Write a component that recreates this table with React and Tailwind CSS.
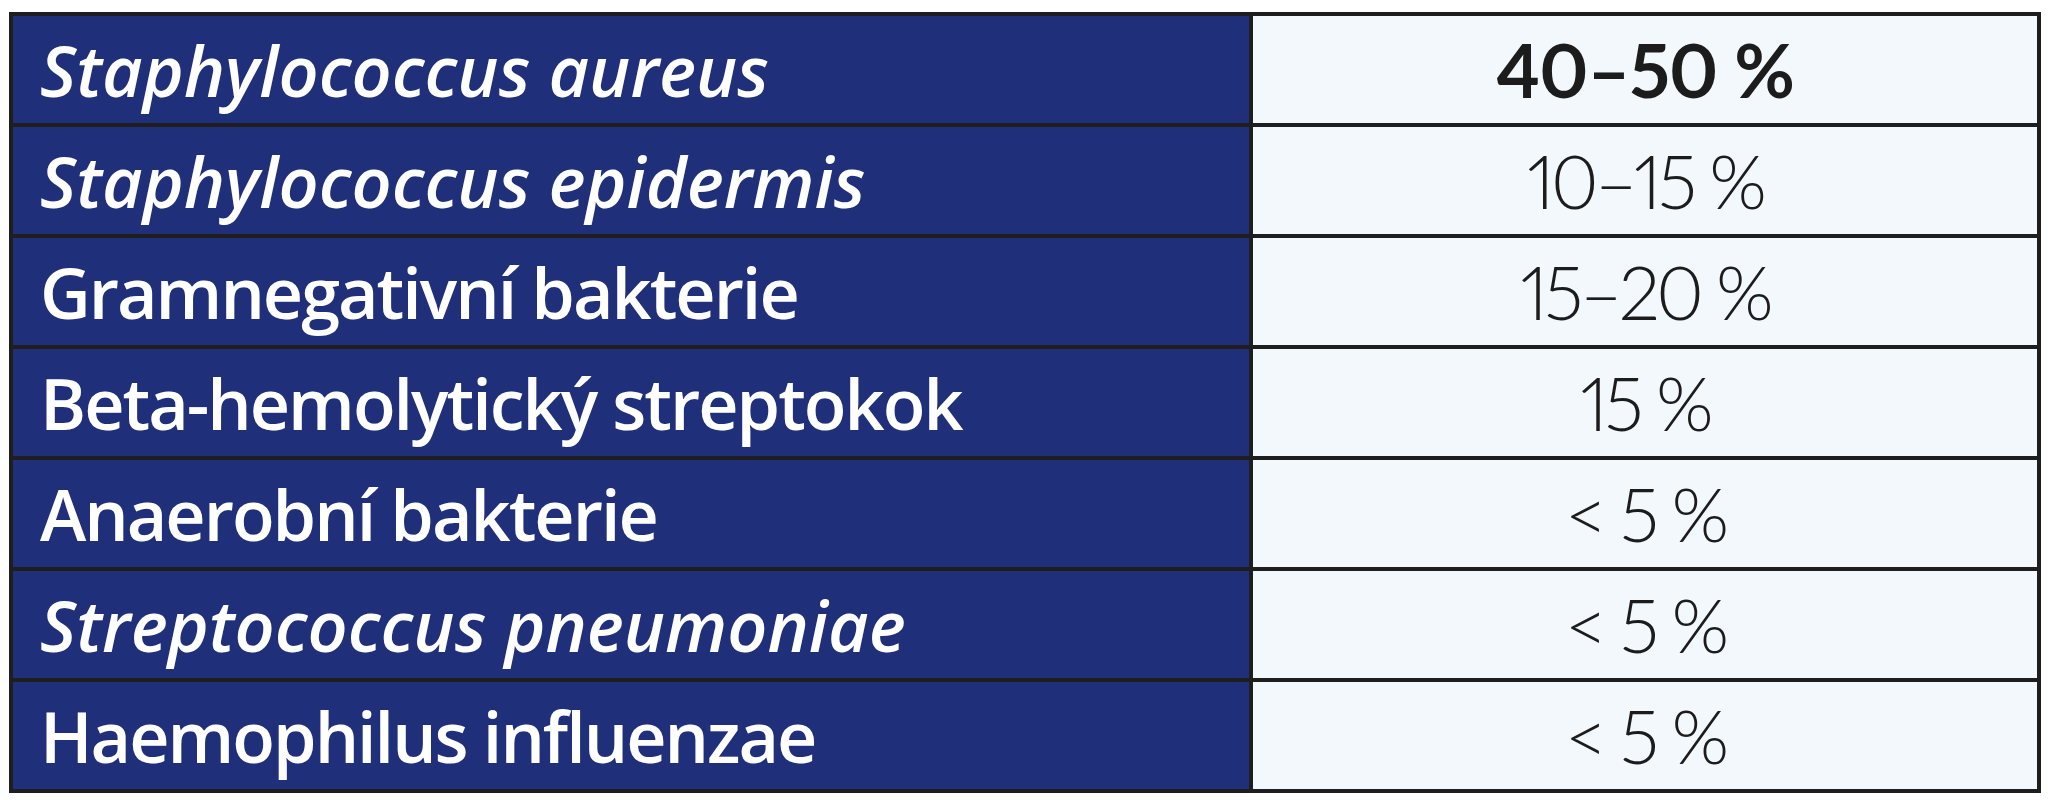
const rows = [
  { name: "Staphylococcus aureus", italic: true, value: "40–50 %", bold: true },
  { name: "Staphylococcus epidermis", italic: true, value: "10–15 %" },
  { name: "Gramnegativní bakterie", value: "15–20 %" },
  { name: "Beta-hemolytický streptokok", value: "15 %" },
  { name: "Anaerobní bakterie", value: "< 5 %" },
  { name: "Streptococcus pneumoniae", italic: true, value: "< 5 %" },
  { name: "Haemophilus influenzae", value: "< 5 %" },
];

export default function App() {
  return (
    <div className="min-h-screen bg-white pt-[12px] pl-[9px]">
      <div className="w-[2032px] border-[4px] border-[#1e1e1e]">
        {rows.map((row, i) => (
          <div
            key={row.name}
            className={`flex ${i < rows.length - 1 ? "h-[111px] border-b-[4px] border-[#1e1e1e]" : "h-[107px]"}`}
          >
            <div className="w-[1240px] flex items-center pl-[27px] bg-[#1f2f79] border-r-[4px] border-[#1e1e1e]">
              <span
                className={`text-white text-[70px] leading-none font-semibold font-['Open_Sans',sans-serif] ${row.italic ? "italic tracking-[0px]" : "tracking-[-2px]"}`}
              >
                {row.name}
              </span>
            </div>
            <div className="flex-1 flex items-center justify-center bg-[#f3f8fd]">
              <span
                className={`text-[#1c1c1c] text-[74px] leading-none proportional-nums font-['Lato',sans-serif] ${row.bold ? "font-bold tracking-[-1px]" : "font-light tracking-[-4px]"}`}
              >
                {row.value}
              </span>
            </div>
          </div>
        ))}
      </div>
    </div>
  );
}
